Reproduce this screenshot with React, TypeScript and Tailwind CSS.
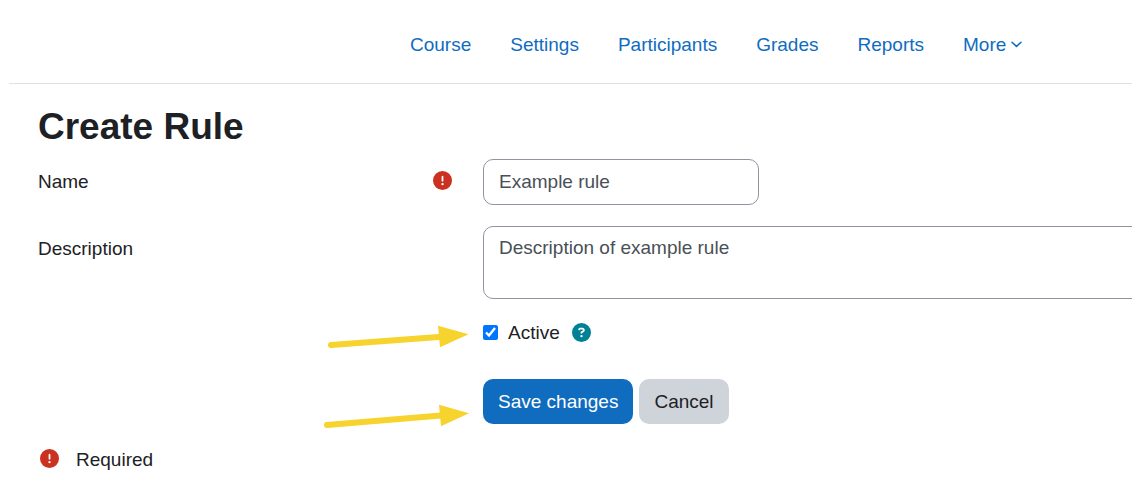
import { FaCircleExclamation, FaCircleQuestion } from "react-icons/fa6";

const links = ["Course", "Settings", "Participants", "Grades", "Reports"];

function RequiredIcon() {
  return <FaCircleExclamation className="size-[19px] shrink-0 text-[#ca3120]" aria-hidden="true" />;
}

export default function App() {
  return (
    <div className="overflow-hidden bg-white font-['Liberation_Sans',Arial,sans-serif] text-[19px] leading-7 text-[#1d2125]">
      <header className="ml-[9px] border-b border-[#dee2e6] pt-[31px] pb-6 pl-[401px]">
        <nav className="flex gap-[39px] text-[#0f6cbf]">
          {links.map((label) => (
            <a key={label} href="#">
              {label}
            </a>
          ))}
          <a href="#" className="flex items-center gap-[5px]">
            More
            <svg width="11" height="7" viewBox="0 0 11 7" className="mb-px" aria-hidden="true">
              <path d="M1 1.2 5.5 5.4 10 1.2" fill="none" stroke="currentColor" strokeWidth="1.5" strokeLinecap="round" strokeLinejoin="round" />
            </svg>
          </a>
        </nav>
      </header>
      <main className="pt-5 pl-[38px]">
        <h1 className="text-[37px] leading-[46px] font-bold">Create Rule</h1>
        <form className="mt-[9px]" onSubmit={(e) => e.preventDefault()}>
          <div className="flex">
            <div className="flex w-[445px] shrink-0 items-start justify-between pt-[9px] pr-[31px]">
              <label htmlFor="name">Name</label>
              <span className="pt-[3px]">
                <RequiredIcon />
              </span>
            </div>
            <input
              id="name"
              type="text"
              defaultValue="Example rule"
              className="h-[46px] w-[276px] rounded-[10px] border border-[#8f959e] px-[15px] text-[#495057]"
            />
          </div>
          <div className="mt-[21px] flex">
            <label htmlFor="description" className="w-[445px] shrink-0 pt-[9px]">
              Description
            </label>
            <textarea
              id="description"
              defaultValue="Description of example rule"
              className="-mr-5 h-[73px] flex-1 resize-none rounded-[10px] border border-[#8f959e] px-[15px] py-[7px] text-[#495057]"
            />
          </div>
          <div className="relative mt-5 flex items-start pl-[445px]">
            <svg className="absolute top-[5px] left-[286px]" width="148" height="26" viewBox="0 0 148 26" aria-hidden="true">
              <path d="M7 21 118 12.8" fill="none" stroke="#f6d32d" strokeWidth="6" strokeLinecap="round" />
              <path d="M114 1.8 144.500 10.300 116 23.300Z" fill="#f6d32d" />
            </svg>
            <input id="active" type="checkbox" defaultChecked className="mt-[6px] size-[15px] accent-[#0075ff]" />
            <label htmlFor="active" className="ml-[10px]">
              Active
            </label>
            <button type="button" aria-label="Help with Active" className="ml-3 pt-1 text-[#008196]">
              <FaCircleQuestion className="size-[19px]" aria-hidden="true" />
            </button>
          </div>
          <div className="relative mt-8 flex gap-[6px] pl-[445px]">
            <svg className="absolute top-6 left-[282px]" width="152" height="26" viewBox="0 0 152 26" aria-hidden="true">
              <path d="M7 22 121 12.600" fill="none" stroke="#f6d32d" strokeWidth="6" strokeLinecap="round" />
              <path d="M119 1.800 149 10.300 121 23.300Z" fill="#f6d32d" />
            </svg>
            <button type="submit" className="h-[45px] rounded-[10px] bg-[#0f6cbf] px-[15px] text-white">
              Save changes
            </button>
            <button type="button" className="h-[45px] rounded-[10px] bg-[#ced4da] px-[15px]">
              Cancel
            </button>
          </div>
          <div className="mt-[22px] flex items-start gap-[17px] pl-[2px]">
            <span className="pt-[3px]">
              <RequiredIcon />
            </span>
            <span>Required</span>
          </div>
        </form>
      </main>
    </div>
  );
}
